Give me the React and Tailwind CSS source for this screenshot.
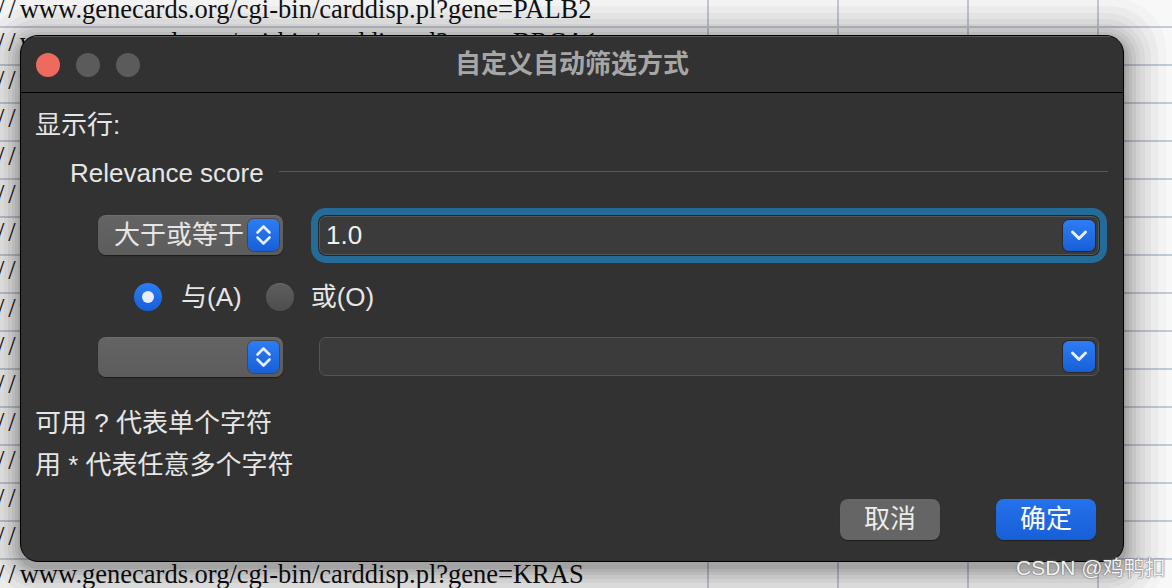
const genes = ['BRCA1','BRCA2','TP53','ATM','CHEK2','PTEN','CDH1','STK11','NBN','RAD51C','RAD51D','BARD1','MLH1','MSH2'];

function SheetRow({ first, text }) {
  return (
    <div className={`flex shrink-0 border-b-2 border-[#c3cad8] ${first ? 'h-[28px]' : 'h-[38px]'}`}>
      <div className="w-[709px] shrink-0 border-r-2 border-[#c3cad8] overflow-hidden">
        <span className={`block whitespace-nowrap -ml-[3px] ${first ? 'leading-[18px]' : 'leading-[28px]'}`}>
          <span className="tracking-[4px]">//</span>
          {text}
        </span>
      </div>
      <div className="w-[130px] shrink-0 border-r-2 border-[#c3cad8]" />
      <div className="w-[130px] shrink-0 border-r-2 border-[#c3cad8]" />
      <div className="w-[130px] shrink-0 border-r-2 border-[#c3cad8]" />
      <div className="w-[130px] shrink-0 border-r-2 border-[#c3cad8]" />
    </div>
  );
}

function Stepper() {
  return (
    <div className="w-[31px] h-[32px] shrink-0 rounded-[6px] bg-gradient-to-b from-[#2d7df4] to-[#185fd7] shadow-[0_0_0_1px_rgba(0,0,0,0.25)] flex items-center justify-center">
      <svg width="31" height="32" viewBox="0 0 31 32" fill="none">
        <path d="M9.5 13.5 L15.5 7.5 L21.5 13.5" stroke="#e8effc" strokeWidth="2.6" strokeLinecap="round" strokeLinejoin="round" />
        <path d="M9.5 18.5 L15.5 24.5 L21.5 18.5" stroke="#e8effc" strokeWidth="2.6" strokeLinecap="round" strokeLinejoin="round" />
      </svg>
    </div>
  );
}

function DownButton() {
  return (
    <div className="w-[32px] h-[31px] shrink-0 rounded-[6px] bg-gradient-to-b from-[#2d7df4] to-[#185fd7] shadow-[0_0_0_1px_rgba(0,0,0,0.3)] flex items-center justify-center">
      <svg width="32" height="31" viewBox="0 0 32 31" fill="none">
        <path d="M9.5 12 L16 18.5 L22.5 12" stroke="#e8effc" strokeWidth="3" strokeLinecap="round" strokeLinejoin="round" />
      </svg>
    </div>
  );
}

function Popup({ label }) {
  return (
    <div className="w-[185px] h-[40px] shrink-0 rounded-[8px] bg-gradient-to-b from-[#646464] to-[#5c5c5c] shadow-[0_1px_1px_rgba(0,0,0,0.45),inset_0_1px_0_rgba(255,255,255,0.06)] flex items-center justify-between pl-[16px] pr-[4px]">
      <span className="text-[#e6e6e6] whitespace-nowrap">{label}</span>
      <Stepper />
    </div>
  );
}

function Field({ value, focused }) {
  return (
    <div
      className={`w-[780px] h-[39px] shrink-0 rounded-[7px] bg-[#3b3b3b] border border-[#555555] flex items-center justify-between pl-[6px] pr-[3px] ${
        focused ? 'shadow-[0_0_0_1px_#262626,0_0_0_8px_#256b98]' : ''
      }`}
    >
      <span className="text-[#f0f0f0]">{value}</span>
      <DownButton />
    </div>
  );
}

export default function App() {
  return (
    <div className="relative w-[1172px] h-[588px] overflow-hidden bg-[#f8f8f8] font-['Liberation_Sans','Noto_Sans_CJK_SC',sans-serif]">
      <div className="flex flex-col font-['Liberation_Serif','Noto_Sans_CJK_SC',serif] text-[26.5px] text-[#111]">
        <SheetRow first text="www.genecards.org/cgi-bin/carddisp.pl?gene=PALB2" />
        {genes.map((g) => (
          <SheetRow key={g} text={`www.genecards.org/cgi-bin/carddisp.pl?gene=${g}`} />
        ))}
        <SheetRow text="www.genecards.org/cgi-bin/carddisp.pl?gene=KRAS" />
      </div>

      <div className="absolute left-[20px] top-[35px] z-10 w-[1104px] h-[527px] rounded-[18px] bg-[#323232] border border-black shadow-[0_5px_0_2px_rgba(0,0,0,0.07),0_5px_0_5px_rgba(0,0,0,0.06),0_5px_0_8px_rgba(0,0,0,0.05),0_5px_0_12px_rgba(0,0,0,0.05),0_5px_0_16px_rgba(0,0,0,0.04),0_5px_0_21px_rgba(0,0,0,0.04),0_5px_0_27px_rgba(0,0,0,0.03),0_5px_0_34px_rgba(0,0,0,0.03),0_5px_0_42px_rgba(0,0,0,0.02)] flex flex-col overflow-hidden">
        <div className="h-[57px] shrink-0 border-b border-black grid grid-cols-[1fr_auto_1fr] items-center border-t border-t-[#5a5a5a]">
          <div className="flex items-center gap-[16px] pl-[15px]">
            <div className="w-[24px] h-[24px] rounded-full bg-[#ec6a5e]" />
            <div className="w-[24px] h-[24px] rounded-full bg-[#5b5b5b]" />
            <div className="w-[24px] h-[24px] rounded-full bg-[#5b5b5b]" />
          </div>
          <div className="text-[26px] font-bold text-[#a6a6a6]">自定义自动筛选方式</div>
          <div />
        </div>

        <div className="flex flex-col text-[26px] text-[#e6e6e6]">
          <div className="mt-[12px] h-[40px] flex items-center pl-[14px]">显示行:</div>

          <div className="mt-[8px] h-[40px] flex items-center pl-[49px] pr-[15px]">
            <span className="whitespace-nowrap">Relevance score</span>
            <div className="ml-[15px] flex-1 h-px bg-[#585858] -translate-y-[2px]" />
          </div>

          <div className="mt-[14px] h-[56px] flex items-center pl-[77px] gap-[36px]">
            <Popup label="大于或等于" />
            <Field value="1.0" focused />
          </div>

          <div className="mt-[14px] h-[40px] flex items-center pl-[113px]">
            <div className="w-[28px] h-[28px] rounded-full bg-gradient-to-b from-[#2c7cf3] to-[#185fd7] flex items-center justify-center">
              <div className="w-[12px] h-[12px] rounded-full bg-[#e6eefc]" />
            </div>
            <span className="ml-[19px] whitespace-nowrap">与(A)</span>
            <div className="ml-[24px] w-[28px] h-[28px] rounded-full bg-gradient-to-b from-[#5e5e5e] to-[#4e4e4e] shadow-[inset_0_1px_0_rgba(255,255,255,0.06)]" />
            <span className="ml-[17px] whitespace-nowrap">或(O)</span>
          </div>

          <div className="mt-[19px] h-[41px] flex items-center pl-[77px] gap-[36px]">
            <Popup label="" />
            <Field value="" />
          </div>

          <div className="mt-[26px] h-[40px] flex items-center pl-[14px] whitespace-nowrap">可用 ? 代表单个字符</div>
          <div className="mt-[2px] h-[40px] flex items-center pl-[14px] whitespace-nowrap">用 * 代表任意多个字符</div>

          <div className="mt-[14px] flex justify-end gap-[56px] pr-[27px]">
            <div className="w-[100px] h-[41px] rounded-[8px] bg-[#656565] shadow-[0_1px_1px_rgba(0,0,0,0.4)] flex items-center justify-center text-[#ececec]">取消</div>
            <div className="w-[100px] h-[41px] rounded-[8px] bg-gradient-to-b from-[#2572ec] to-[#175fd6] shadow-[0_1px_1px_rgba(0,0,0,0.4)] flex items-center justify-center text-white">确定</div>
          </div>
        </div>
      </div>

      <div className="absolute left-[1016px] top-[552px] z-20 text-[21px] text-[#f4f4f4] whitespace-nowrap [text-shadow:0_0_1px_#555,0_0_2px_#777]">CSDN @鸡鸭扣</div>
    </div>
  );
}
